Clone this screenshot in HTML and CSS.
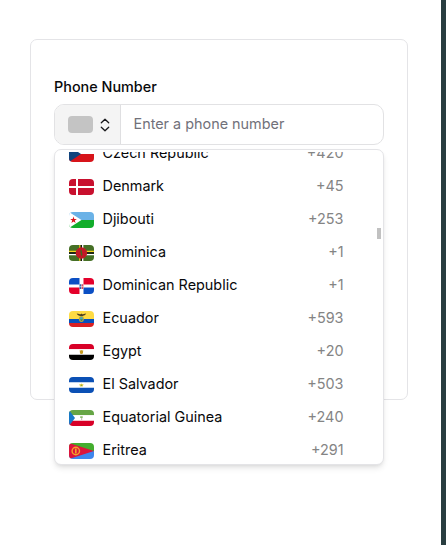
FILE: index.html
```html
<!DOCTYPE html>
<html lang="en">
<head>
<meta charset="utf-8">
<title>Phone Number</title>
<link rel="stylesheet" href="styles.css">
</head>
<body>
<main class="page">
  <section class="card">
    <label class="label" for="phone">Phone Number</label>
    <div class="field">
      <button class="country" type="button">
        <span class="blank-flag"></span>
        <svg class="chevrons" viewBox="0 0 10 14"><path d="M1.300 4.700 5 1.200l3.700 3.500M1.300 9.300 5 12.800l3.700-3.500"/></svg>
      </button>
      <input class="input" id="phone" type="tel" placeholder="Enter a phone number">
    </div>
    <div class="popover">
      <ul class="list">
        <li class="row"><svg class="flag" viewBox="0 0 25 16" preserveAspectRatio="none"><path fill="#fff" d="M0 0h25v8H0z"/><path fill="#d7141a" d="M0 8h25v8H0z"/><path fill="#11457e" d="m0 0 12 8-12 8z"/></svg><span class="name">Czech Republic</span><span class="code">+420</span></li>
        <li class="row"><svg class="flag" viewBox="0 0 25 16" preserveAspectRatio="none"><path fill="#c8102e" d="M0 0h25v16H0z"/><path stroke="#fff" stroke-width="2" d="M0 8h25M8 0v16"/></svg><span class="name">Denmark</span><span class="code">+45</span></li>
        <li class="row"><svg class="flag" viewBox="0 0 25 16" preserveAspectRatio="none"><path fill="#6ab2e7" d="M0 0h25v8H0z"/><path fill="#12ad2b" d="M0 8h25v8H0z"/><path fill="#fff" d="m0 0 12.500 8L0 16z"/><path fill="#d7141a" d="m4.500 4.600.8 2.400h2.500L5.800 8.500l.8 2.500-2.100-1.500L2.400 11l.8-2.500-2-1.500h2.500z"/></svg><span class="name">Djibouti</span><span class="code">+253</span></li>
        <li class="row"><svg class="flag" viewBox="0 0 25 16" preserveAspectRatio="none"><path fill="#456f25" d="M0 0h25v16H0z"/><path stroke="#f5d51d" stroke-width="1.300" d="M0 6.300h25M10.900 0v16"/><path stroke="#111" stroke-width="1.300" d="M0 8h25M12.300 0v16"/><path stroke="#fff" stroke-width="1.300" d="M0 9.600h25M13.700 0v16"/><circle cx="12.400" cy="8" r="5.700" fill="#c91427"/><circle cx="12.400" cy="8" r="4.200" fill="none" stroke="#64601f" stroke-width=".8" stroke-dasharray=".8 1.850"/><path stroke="#49651f" stroke-width="1.500" d="m11.900 5.200.9 5.300"/></svg><span class="name">Dominica</span><span class="code">+1</span></li>
        <li class="row"><svg class="flag" viewBox="0 0 25 16" preserveAspectRatio="none"><path fill="#fff" d="M0 0h25v16H0z"/><path fill="#0b4fc4" d="M0 0h10.500v6.400H0zM14.500 9.600H25V16H14.500z"/><path fill="#e4002b" d="M14.500 0H25v6.400H14.500zM0 9.600h10.500V16H0z"/><path fill="#2a62ad" d="M10.500 6.300h1.800v4.600h-1.800z"/><path fill="#d64a5b" d="M12.600 6.300h1.800v4.600h-1.800z"/><path stroke="#fff" stroke-width=".5" d="M10.500 8.600h4"/></svg><span class="name">Dominican Republic</span><span class="code">+1</span></li>
        <li class="row"><svg class="flag" viewBox="0 0 25 16" preserveAspectRatio="none"><path fill="#ffdb43" d="M0 0h25v8H0z"/><path fill="#0650bd" d="M0 8h25v4H0z"/><path fill="#d92023" d="M0 12h25v4H0z"/><path fill="#51411f" d="M7.700 2.500c2 .3 3 .7 4 .7l.8-.8.7.8c1 0 2-.4 4-.7-.8 1.600-2 2-3.400 2.500H11C9.500 4.500 8.400 4 7.700 2.500z"/><ellipse cx="12.400" cy="8" rx="2.500" ry="3" fill="#b7a73a"/><ellipse cx="12.400" cy="7.700" rx="1.500" ry="2" fill="#50a8ad"/><path fill="#437643" d="M11 8.400h3L12.500 10z"/></svg><span class="name">Ecuador</span><span class="code">+593</span></li>
        <li class="row"><svg class="flag" viewBox="0 0 25 16" preserveAspectRatio="none"><path fill="#d80027" d="M0 0h25v5.300H0z"/><path fill="#fff" d="M0 5.300h25v5.400H0z"/><path fill="#000" d="M0 10.700h25V16H0z"/><path fill="#c69b20" d="m10.700 6.200 1.100.3.600-.6.700.6 1.100-.3-.3 3.200-1.500.7-1.400-.7z"/></svg><span class="name">Egypt</span><span class="code">+20</span></li>
        <li class="row"><svg class="flag" viewBox="0 0 25 16" preserveAspectRatio="none"><path fill="#0b50b5" d="M0 0h25v16H0z"/><path fill="#fff" d="M0 5.300h25v5.400H0z"/><path fill="#e2ce45" d="m10.300 7 1.200.2.900-.8.900.8 1.200-.2-.7 2.500h-2.800z"/><path fill="#7d9c47" d="M11.900 7.700h1v1.400h-1z"/></svg><span class="name">El Salvador</span><span class="code">+503</span></li>
        <li class="row"><svg class="flag" viewBox="0 0 25 16" preserveAspectRatio="none"><path fill="#65a544" d="M0 0h25v5.300H0z"/><path fill="#fff" d="M0 5.300h25v5.400H0z"/><path fill="#d80027" d="M0 10.700h25V16H0z"/><path fill="#1779c8" d="m0 0 6 8-6 8z"/><path fill="#8cbd6e" d="M11.200 6.200h2.500V8h-2.500z"/><path fill="#b7b6a7" d="M12.200 8h1v2h-1z"/></svg><span class="name">Equatorial Guinea</span><span class="code">+240</span></li>
        <li class="row"><svg class="flag" viewBox="0 0 25 16" preserveAspectRatio="none"><path fill="#43ad2e" d="M0 0h25v8H0z"/><path fill="#3f86ed" d="M0 8h25v8H0z"/><path fill="#dc143c" d="m0 0 25 8L0 16z"/><circle cx="6.800" cy="8" r="3.700" fill="none" stroke="#f3a52a" stroke-width="1.400"/><path stroke="#f3a52a" stroke-width="1.600" d="M6.800 5.500v5"/></svg><span class="name">Eritrea</span><span class="code">+291</span></li>
      </ul>
      <span class="thumb"></span>
    </div>
  </section>
</main>
<div class="edge"></div>
</body>
</html>
```
FILE: styles.css
```css
* { box-sizing: border-box; }
body {
  margin: 0;
  height: 545px;
  display: flex;
  overflow: hidden;
  background: #fff;
  color: #09090b;
  font: 14.4px/20px Inter, "Liberation Sans", sans-serif;
}
.page { flex: 1; padding: 39px 33px 0 30px; }
.edge { width: 5px; background: #293d40; }
.card {
  position: relative;
  height: 361px;
  padding: 37px 23px 0;
  border: 1px solid #e4e4e7;
  border-radius: 7px;
}
.label { display: block; height: 20px; font-weight: 500; }
.field {
  display: flex;
  height: 41px;
  margin-top: 7px;
  border: 1px solid #e2e2e4;
  border-radius: 10px;
  overflow: hidden;
}
.country {
  display: flex;
  align-items: center;
  gap: 7px;
  width: 66px;
  padding: 0 0 0 13px;
  border: 0;
  border-right: 1px solid #dfdfe1;
  background: #f4f4f4;
}
.blank-flag { width: 25px; height: 17px; border-radius: 4px; background: #c4c4c4; }
.chevrons { width: 10px; height: 14px; fill: none; stroke: #18181b; stroke-width: 1.3; stroke-linecap: round; stroke-linejoin: round; }
.input {
  flex: 1;
  min-width: 0;
  padding: 0 12.5px 2px;
  border: 0;
  background: none;
  font: inherit;
}
.input::placeholder { color: #71717a; opacity: 1; }
.popover {
  position: absolute;
  top: 109px;
  left: 23px;
  width: 330px;
  height: 316px;
  padding: 2px 0 1px;
  border: 1px solid #e4e4e7;
  border-radius: 7px;
  background: #fff;
  box-shadow: 0 4px 6px -1px rgb(0 0 0 / .1), 0 2px 4px -2px rgb(0 0 0 / .1);
}
.list {
  display: flex;
  flex-direction: column;
  justify-content: flex-end;
  height: 100%;
  margin: 0;
  padding: 0 39.5px 0 14px;
  overflow: hidden;
  list-style: none;
}
.row { display: flex; flex: none; align-items: center; gap: 8.5px; height: 33px; }
.row:last-child { margin-bottom: -3px; }
.flag { width: 25px; height: 16px; margin-top: 2px; border-radius: 4px; }
.name { flex: 1; }
.code { color: #848484; }
.thumb { position: absolute; top: 78px; right: 2px; width: 4px; height: 11px; background: #c1c1c1; }
```
